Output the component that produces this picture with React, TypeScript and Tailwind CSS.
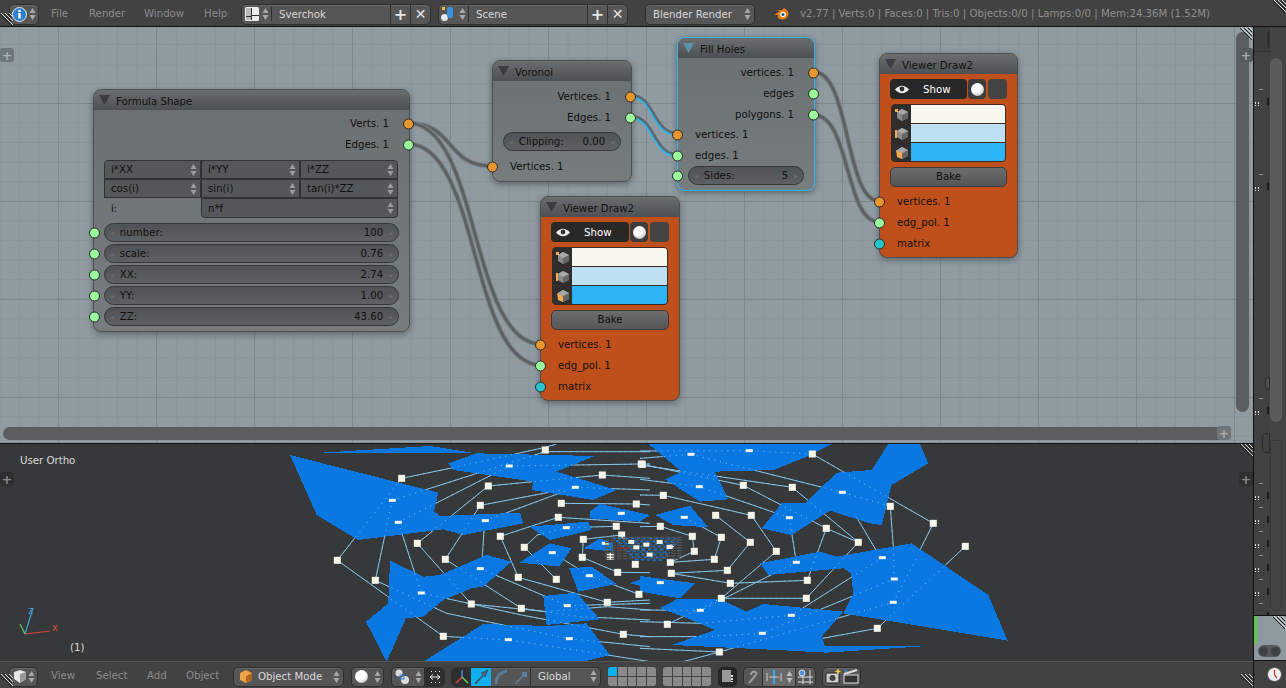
import type { ReactNode } from 'react';

const pill = 'flex items-center rounded-[5px] border border-[#2f2f2f] bg-[#565656] shadow-[inset_0_1px_0_#666]';
const nodeText = 'text-[10.2px] leading-none text-[#101010]';

function UpDown({ color = '#a8a8a8' }: { color?: string }) {
  return (
    <svg width="7" height="14" viewBox="0 0 7 14" className="shrink-0">
      <path d="M3.5 1 L6.5 6 H.5Z M3.5 13 L6.5 8 H.5Z" fill={color} />
    </svg>
  );
}

function Hatch({ className }: { className: string }) {
  return (
    <svg width="13" height="13" viewBox="0 0 13 13" className={`absolute ${className}`}>
      <path d="M1 0 L13 12 M5 0 L13 8 M9 0 L13 4" stroke="#d8d8d8" strokeWidth="1" />
      <path d="M0 1 L12 13 M4 1 L12 9 M8 1 L12 5" stroke="#222" strokeWidth="1" />
    </svg>
  );
}

function PlusTab({ className }: { className: string }) {
  return (
    <div className={`absolute flex h-[14px] w-[14px] items-center justify-center rounded-[3px] text-[13px] leading-none font-bold ${className}`}>
      +
    </div>
  );
}

function Socket({ color, side }: { color: string; side: 'left' | 'right' }) {
  const place = side === 'left' ? '-left-[6px]' : '-right-[5px]';
  const colors: Record<string, string> = {
    orange: 'bg-[#e8962e]',
    green: 'bg-[#9afc9a]',
    teal: 'bg-[#27c3cb]',
  };
  return (
    <span className={`absolute top-1/2 h-[11px] w-[11px] -translate-y-1/2 rounded-full border border-[#2a2a2a] ${place} ${colors[color]}`} />
  );
}

function Node({
  title,
  className,
  orange,
  active,
  children,
}: {
  title: string;
  className: string;
  orange?: boolean;
  active?: boolean;
  children: ReactNode;
}) {
  return (
    <div
      className={`absolute rounded-[8px] border shadow-[0_2px_6px_rgba(0,0,0,0.35)] ${
        active ? 'border-[#2bb6ee]' : 'border-[#4c5052]'
      } ${orange ? 'bg-[#bf501c]' : 'bg-[linear-gradient(#6a7072,#777d7f)]'} ${className}`}
    >
      <div className="flex h-[20px] items-center gap-[6px] rounded-t-[7px] bg-[linear-gradient(#6b6e70,#4d5052)] pl-[5px]">
        <svg width="11" height="10" viewBox="0 0 11 10">
          <path d="M0 0 H11 L5.5 10Z" fill={active ? '#5b92aa' : '#3b3e40'} />
        </svg>
        <span className={`translate-y-[1.5px] ${nodeText}`}>{title}</span>
      </div>
      {children}
    </div>
  );
}

function OutRow({ label, color }: { label: string; color: string }) {
  return (
    <div className={`relative flex h-[21px] items-center justify-end pt-[2px] pr-[20px] ${nodeText}`}>
      {label}
      <Socket color={color} side="right" />
    </div>
  );
}

function InRow({ label, color, className = '' }: { label: string; color: string; className?: string }) {
  return (
    <div className={`relative flex h-[21px] items-center pt-[2px] pl-[17px] ${nodeText} ${className}`}>
      {label}
      <Socket color={color} side="left" />
    </div>
  );
}

function Slider({ label, value, socket, className = '' }: { label: string; value: string; socket?: boolean; className?: string }) {
  return (
    <div className={`relative ${className}`}>
      <div className={`flex h-[19px] items-center justify-between rounded-full border border-[#343638] bg-[linear-gradient(#505355,#5e6163)] px-[5px] pt-[2px] ${nodeText}`}>
        <span className="flex items-center gap-[6px]">
          <span className="text-[5px] text-[#686c6e]">◀</span>
          {label}
        </span>
        <span className="flex items-center gap-[6px]">
          {value}
          <span className="text-[5px] text-[#686c6e]">▶</span>
        </span>
      </div>
      {socket && <span className="absolute top-1/2 -left-[15px] h-[11px] w-[11px] -translate-y-1/2 rounded-full border border-[#2a2a2a] bg-[#9afc9a]" />}
    </div>
  );
}

function Cell({ text, className = '' }: { text: string; className?: string }) {
  return (
    <div className={`flex items-center justify-between border border-[#303234] bg-[#54585a] pr-[3px] pl-[6px] ${nodeText} ${className}`}>
      <span className="translate-y-[1px]">{text}</span>
      <UpDown color="#9a9da0" />
    </div>
  );
}

function CubeIcon({ mark }: { mark: 'v' | 'e' | 'f' }) {
  return (
    <svg width="15" height="15" viewBox="0 0 15 15">
      <path d="M8 2 L14 5 V11 L8 14 L3 11 V5Z" fill="#8a8a8a" />
      <path d="M8 8 L14 5 V11 L8 14Z" fill="#666" />
      <path d="M8 8 L3 5 L8 2 L14 5Z" fill="#a8a8a8" />
      {mark === 'v' && <rect x="1" y="2" width="3" height="3" fill="#f5a94e" />}
      {mark === 'e' && <rect x="1" y="4" width="2" height="8" fill="#f5a94e" />}
      {mark === 'f' && <path d="M2 5 L8 8 V14 L3 12Z" fill="#f5a94e" />}
    </svg>
  );
}

function ViewerBody() {
  const swatches = ['bg-[#f9f8f0]', 'bg-[#bde0f2]', 'bg-[#2db4f5]'];
  const marks = ['v', 'e', 'f'] as const;
  return (
    <div className="flex flex-col pt-[5px]">
      <div className="flex h-[20px] gap-[1px] px-[10px]">
        <div className="flex w-[78px] items-center rounded-[4px] bg-[#282828] pl-[5px] text-[10.2px] text-white">
          <svg width="14" height="9" viewBox="0 0 14 9">
            <path d="M0 4.5 Q7 -3 14 4.5 Q7 12 0 4.5Z" fill="#eee" />
            <circle cx="7" cy="4" r="2.4" fill="#333" />
          </svg>
          <span className="ml-[14px] translate-y-[1px]">Show</span>
        </div>
        <div className="flex w-[18px] items-center justify-center rounded-[4px] bg-[#3c3c3c]">
          <span className="h-[13px] w-[13px] rounded-full bg-[radial-gradient(circle_at_40%_35%,#fff_40%,#999)]" />
        </div>
        <div className="ml-[1px] w-[19px] rounded-[4px] bg-[#444]" />
      </div>
      <div className="mx-[11px] mt-[5px] flex flex-col gap-[1px] overflow-hidden rounded-[4px] border border-[#3a2a22] bg-[#3a2a22]">
        {swatches.map((s, i) => (
          <div key={s} className="flex h-[18px]">
            <div className="flex w-[19px] items-center justify-center bg-[#2e2e2e]">
              <CubeIcon mark={marks[i]} />
            </div>
            <div className={`flex-1 ${s}`} />
          </div>
        ))}
      </div>
      <div className={`mx-[10px] mt-[5px] flex h-[20px] items-center justify-center rounded-[5px] border border-[#3b3b3b] bg-[linear-gradient(#6c6c6c,#565656)] pt-[1px] ${nodeText}`}>
        Bake
      </div>
      <div className="mt-[4px]">
        <InRow label="vertices. 1" color="orange" />
        <InRow label="edg_pol. 1" color="green" />
        <InRow label="matrix" color="teal" />
      </div>
    </div>
  );
}

const wires = [
  'M408 123 C455 123 445 166 492 166',
  'M408 123 C480 123 470 344 541 344',
  'M408 144 C480 144 470 365 541 365',
  'M814 72 C850 72 845 201 879 201',
  'M814 115 C850 115 845 222 879 222',
];
const activeWires = ['M630 96 C655 96 652 134 677 134', 'M630 117 C655 117 652 155 677 155'];

function NodeEditor() {
  const rows: [string, string][] = [
    ['number:', '100'],
    ['scale:', '0.76'],
    ['XX:', '2.74'],
    ['YY:', '1.00'],
    ['ZZ:', '43.60'],
  ];
  return (
    <div className="relative h-[416px] overflow-hidden bg-[#8f9aa1] [background-image:linear-gradient(#7c878e_1px,transparent_1px),linear-gradient(90deg,#7c878e_1px,transparent_1px),linear-gradient(#88939a_1px,transparent_1px),linear-gradient(90deg,#88939a_1px,transparent_1px)] [background-position:0_76px,58px_0,0_17px,19px_0] [background-size:100%_98px,98px_100%,100%_19.6px,19.6px_100%]">
      <svg width="1253" height="416" viewBox="0 27 1253 416" className="absolute inset-0">
        {wires.map((d) => (
          <g key={d} fill="none">
            <path d={d} stroke="#7c8488" strokeWidth="5" />
            <path d={d} stroke="#5d6163" strokeWidth="3" />
          </g>
        ))}
        {activeWires.map((d) => (
          <g key={d} fill="none">
            <path d={d} stroke="#2bb6ee" strokeWidth="4" />
            <path d={d} stroke="#61686c" strokeWidth="2.5" transform="translate(.5 -1)" />
          </g>
        ))}
      </svg>

      <Node title="Formula Shape" className="top-[62px] left-[93px] h-[243px] w-[317px]">
        <div className="pt-[3px]">
          <OutRow label="Verts. 1" color="orange" />
          <OutRow label="Edges. 1" color="green" />
        </div>
        <div className="mx-[10px] mt-[5px] grid grid-cols-[97px_99px_98px] grid-rows-[19px_19px_20px]">
          <Cell text="i*XX" className="rounded-tl-[4px]" />
          <Cell text="i*YY" />
          <Cell text="i*ZZ" className="rounded-tr-[4px]" />
          <Cell text="cos(i)" />
          <Cell text="sin(i)" />
          <Cell text="tan(i)*ZZ" />
          <div className={`flex items-center pt-[3px] pl-[7px] ${nodeText}`}>i:</div>
          <Cell text="n*f" className="col-span-2 rounded-b-[4px]" />
        </div>
        <div className="mx-[10px] mt-[5px] flex flex-col gap-[2px]">
          {rows.map(([l, v]) => (
            <Slider key={l} label={l} value={v} socket />
          ))}
        </div>
      </Node>

      <Node title="Voronoi" className="top-[33px] left-[492px] h-[122px] w-[140px]">
        <div className="pt-[5px]">
          <OutRow label="Vertices. 1" color="orange" />
          <OutRow label="Edges. 1" color="green" />
        </div>
        <Slider label="Clipping:" value="0.00" className="mx-[10px] mt-[4px]" />
        <InRow label="Vertices. 1" color="orange" className="mt-[5px]" />
      </Node>

      <Node title="Fill Holes" active className="top-[10px] left-[677px] h-[154px] w-[138px]">
        <div className="pt-[4px]">
          <OutRow label="vertices. 1" color="orange" />
          <OutRow label="edges" color="green" />
          <OutRow label="polygons. 1" color="green" />
        </div>
        <InRow label="vertices. 1" color="orange" className="-mt-[1px]" />
        <InRow label="edges. 1" color="green" />
        <div className="relative mx-[10px]">
          <Slider label="Sides:" value="5" />
          <span className="absolute top-1/2 -left-[16px] h-[11px] w-[11px] -translate-y-1/2 rounded-full border border-[#2a2a2a] bg-[#9afc9a]" />
        </div>
      </Node>

      <Node title="Viewer Draw2" orange className="top-[169px] left-[540px] h-[205px] w-[140px]">
        <ViewerBody />
      </Node>
      <Node title="Viewer Draw2" orange className="top-[26px] left-[879px] h-[205px] w-[139px]">
        <ViewerBody />
      </Node>

      <div className="absolute top-[5px] right-[4px] h-[380px] w-[13px] rounded-full bg-[#5b5e60]" />
      <div className="absolute right-[22px] bottom-[3px] left-[3px] h-[13px] rounded-full bg-[#5b5e60]" />
      <PlusTab className="top-[21px] left-0 bg-[#6c767c] text-[#a9b1b5]" />
      <PlusTab className="top-[21px] right-0 bg-[#555a5d] text-[#a9a9a9]" />
      <PlusTab className="right-[22px] bottom-[3px] bg-[#6e7478] text-[#aaa]" />
      <Hatch className="top-0 right-0" />
    </div>
  );
}

const polys9 = [
  [30, 45, 475, 158, 462, 215, 480, 228, 720, 218, 730, 250, 550, 285, 490, 268, 235, 300, 110, 225],
  [90, 40, 450, 18, 590, 40, 945, 48, 830, 95, 1010, 150, 940, 180, 755, 150, 760, 125, 520, 90, 505, 70, 590, 40],
  [748, 260, 925, 245, 935, 270, 810, 300],
  [930, 215, 960, 192, 1110, 225, 1080, 245, 930, 235],
  [910, 325, 960, 295, 1000, 310, 1000, 335],
  [718, 368, 810, 310, 875, 325, 838, 380],
  [330, 362, 430, 410, 480, 405, 620, 345, 695, 365, 610, 440, 575, 445, 490, 480, 430, 530, 378, 535, 320, 665, 258, 545, 325, 490],
  [868, 385, 935, 380, 1010, 432, 895, 455],
  [1050, 430, 1110, 408, 1110, 445],
  [790, 468, 890, 458, 960, 538, 800, 555],
  [430, 665, 610, 552, 800, 558, 920, 550, 990, 645, 910, 665],
];
const polys10 = [
  [25, 12, 575, 12, 500, 50, 400, 90, 225, 95, 265, 178, 180, 185, 75, 118, 125, 95],
  [745, 12, 840, 12, 865, 70, 755, 135, 725, 255, 690, 250, 570, 212, 455, 285, 365, 265, 425, 190, 495, 190, 590, 98, 695, 90],
  [45, 225, 150, 197, 205, 262, 100, 255],
  [0, 408, 165, 430, 120, 475, 0, 455],
  [360, 370, 540, 335, 590, 350, 815, 310, 1045, 465, 1103, 602, 640, 525, 610, 520, 640, 460, 633, 400, 610, 385, 550, 390, 385, 405],
  [60, 505, 110, 478, 240, 478, 320, 515, 370, 492, 610, 515, 545, 590, 555, 618, 865, 618, 560, 638, 410, 630, 95, 615, 225, 570, 130, 530],
];
const lines9 = [
  [172, 361, 365, 115, 510, 85, 796, 22, 830, 12],
  [337, 181, 796, 35, 1110, 35],
  [337, 181, 286, 421],
  [172, 361, 490, 589, 685, 600, 950, 640, 1110, 665],
  [286, 421, 500, 520, 868, 596, 1110, 620],
  [355, 247, 424, 459, 724, 525, 1030, 583, 1110, 590],
  [355, 247, 688, 78, 1084, 72, 1110, 72],
  [412, 310, 625, 138, 967, 105, 1110, 115],
  [412, 310, 574, 492, 800, 515, 982, 500, 1110, 510],
  [496, 358, 601, 196, 844, 150],
  [496, 358, 724, 505, 900, 530, 1110, 540],
  [601, 386, 862, 497, 1110, 490],
  [616, 242, 886, 142, 1110, 150],
  [661, 289, 715, 412, 982, 487, 1110, 480],
  [661, 289, 835, 232, 1110, 250],
  [733, 322, 772, 285, 859, 263, 1009, 259],
  [733, 322, 829, 418],
  [817, 338, 928, 407, 1077, 463],
  [607, 350, 612, 272],
  [844, 190, 1069, 192, 1110, 195],
  [907, 352, 1013, 397, 1110, 398],
  [907, 352, 910, 298, 1025, 285],
];
const lines10 = [
  [517, 42, 880, 250, 840, 330],
  [976, 319, 895, 395, 760, 520, 712, 565, 548, 595],
  [517, 42, 328, 32, 0, 33],
  [153, 43, 607, 157],
  [0, 55, 153, 43],
  [7, 73, 310, 136, 559, 265, 655, 307],
  [457, 142, 0, 75],
  [457, 142, 655, 307, 499, 475, 245, 475],
  [751, 199, 760, 320, 763, 417],
  [751, 199, 607, 157],
  [650, 232, 708, 330],
  [559, 265, 502, 421, 271, 430, 94, 400],
  [448, 233, 178, 140, 0, 118],
  [334, 226, 409, 334, 244, 475],
  [227, 226, 331, 307, 262, 391, 94, 400],
  [244, 292, 223, 358, 91, 367],
  [0, 165, 70, 166, 334, 226],
  [133, 232, 244, 292],
  [61, 259, 157, 289, 163, 334, 91, 367],
  [0, 260, 61, 259],
  [448, 233, 469, 367],
  [469, 367, 181, 511, 0, 510],
  [727, 353, 454, 526, 181, 550, 0, 545],
  [763, 417, 367, 580, 200, 590, 0, 590],
  [828, 358, 760, 487, 238, 636, 130, 665],
  [82, 553, 244, 475],
  [0, 625, 238, 636],
];
const squares9 = [
  [365, 115], [796, 30], [1084, 72], [967, 105], [625, 138], [601, 196], [844, 190], [1069, 192], [835, 232], [1009, 259],
  [661, 289], [733, 322], [910, 298], [1025, 285], [412, 310], [991, 349], [907, 352], [172, 361], [496, 358], [1066, 373],
  [1013, 397], [715, 412], [829, 418], [286, 421], [1077, 463], [982, 487], [574, 492], [724, 505], [490, 589], [1030, 583],
];
const flats9 = [
  [688, 78], [886, 142], [337, 181], [355, 247], [1024, 220], [616, 242], [859, 263], [976, 310], [817, 338], [601, 386],
  [928, 407], [424, 459], [862, 497], [685, 599], [868, 596],
];
const squares10 = [
  [517, 42], [7, 73], [310, 136], [457, 142], [70, 166], [751, 199], [227, 226], [334, 226], [559, 265], [880, 250], [61, 259],
  [157, 289], [244, 292], [331, 307], [409, 334], [655, 307], [976, 319], [163, 334], [223, 358], [91, 367], [262, 391],
  [94, 400], [271, 430], [502, 421], [244, 475], [499, 475], [82, 553], [712, 565], [238, 636],
];
const flats10 = [
  [328, 32], [153, 43], [178, 140], [607, 157], [133, 232], [448, 233], [91, 318], [469, 367], [727, 353], [763, 417],
  [61, 428], [760, 487], [181, 511], [454, 526], [367, 580],
];

function Mesh({ polys, lines, squares, flats, x }: { polys: number[][]; lines: number[][]; squares: number[][]; flats: number[][]; x: number }) {
  return (
    <g transform={`translate(${x} 440) scale(0.3333)`}>
      {lines.map((l) => (
        <polyline key={l.join()} points={l.join(' ')} fill="none" stroke="#84c6ee" strokeWidth="1" vectorEffect="non-scaling-stroke" />
      ))}
      {polys.map((p) => (
        <polygon key={p.join()} points={p.join(' ')} fill="#0a78e2" shapeRendering="crispEdges" />
      ))}
      {lines.map((l) => (
        <polyline key={l.join()} points={l.join(' ')} fill="none" stroke="#84c6ee" strokeWidth="1" strokeDasharray="1 5" vectorEffect="non-scaling-stroke" />
      ))}
      {squares.map(([a, b]) => (
        <rect key={`${a}-${b}`} x={a - 10.5} y={b - 10.5} width="21" height="21" fill="#f5f5e9" />
      ))}
      {flats.map(([a, b]) => (
        <rect key={`${a}-${b}`} x={a - 10.5} y={b - 4.5} width="21" height="9" fill="#f5f5e9" />
      ))}
    </g>
  );
}

function ThreeDView() {
  const clutter = [292, 300, 308, 316, 324, 332, 340, 348, 356];
  return (
    <div className="relative h-[218px] overflow-hidden border-t border-[#111] bg-[#37383a]">
      <svg width="1253" height="218" viewBox="0 444 1253 218" className="absolute inset-0">
        <Mesh polys={polys10} lines={lines10} squares={squares10} flats={flats10} x={640} />
        <Mesh polys={polys9} lines={lines9} squares={squares9} flats={flats9} x={280} />
        <g transform="translate(280 440) scale(0.3333)">
          {clutter.map((y, i) => (
            <g key={y}>
              <line x1="975" y1={y} x2="1206" y2={y} stroke="#555" strokeWidth="4" strokeDasharray="14 4" />
              <line x1={1000 + i * 8} y1={y + 3} x2={1200 - i * 6} y2={y + 5} stroke="#0a78e2" strokeWidth="4" strokeDasharray="10 8" />
            </g>
          ))}
          <rect x="1010" y="322" width="40" height="6" fill="#8a3030" />
          {[[1060, 316], [1090, 308], [1045, 300], [1100, 338], [1130, 300], [1160, 315]].map(([a, b]) => (
            <rect key={`${a}-${b}`} x={a} y={b} width="18" height="12" fill="#f5f5e9" />
          ))}
        </g>
        <g fill="none" strokeWidth="1.2">
          <path d="M25 634 L33 608" stroke="#3aa0d8" />
          <path d="M25 634 L50 631" stroke="#d84040" />
          <path d="M25 634 L20 624" stroke="#60c060" />
        </g>
      </svg>
      <span className="absolute top-[12px] left-[20px] text-[10.2px] leading-none text-[#dcdcdc]">User Ortho</span>
      <span className="absolute top-[162px] left-[28px] text-[10px] leading-none text-[#4a9cc8]">z</span>
      <span className="absolute top-[179px] left-[52px] text-[10px] leading-none text-[#d84a4a]">x</span>
      <span className="absolute top-[199px] left-[70px] text-[10.2px] leading-none text-[#dcdcdc]">(1)</span>
      <PlusTab className="top-[28px] left-0 bg-[#2e2f31] text-[#888]" />
      <PlusTab className="top-[28px] right-0 bg-[#2e2f31] text-[#888]" />
      <Hatch className="top-0 right-0" />
    </div>
  );
}

function ScreenIcon() {
  return (
    <svg width="14" height="14" viewBox="0 0 14 14">
      <rect x="0" y="0" width="14" height="14" rx="1.5" fill="#eee" />
      <rect x="6" y="1" width="1" height="12" fill="#333" />
      <rect x="7" y="8" width="7" height="1" fill="#333" />
      <rect x="1" y="1" width="5" height="12" fill="#b9b9b9" />
      <rect x="1" y="9" width="5" height="1" fill="#333" />
    </svg>
  );
}

function SceneIcon() {
  return (
    <svg width="15" height="16" viewBox="0 0 15 16">
      <circle cx="3.5" cy="11.5" r="3.5" fill="#e8e8e8" />
      <rect x="6" y="1" width="6" height="11" rx="2" fill="#3f8fe0" />
      <rect x="1" y="1" width="3" height="3" fill="#e8b948" />
    </svg>
  );
}

function NameField({ label, icon, w }: { label: string; icon: ReactNode; w: string }) {
  return (
    <div className={`${pill} h-[21px] ${w}`}>
      <div className="flex w-[30px] items-center justify-center gap-[3px] border-r border-[#2f2f2f]">
        {icon}
        <UpDown />
      </div>
      <span className="flex-1 translate-y-[1px] pl-[7px] text-[10.2px] leading-none text-[#d8d8d8]">{label}</span>
      <span className="flex w-[20px] justify-center border-l border-[#2f2f2f] text-[16px] leading-[19px] font-bold text-[#e6e6e6]">+</span>
      <span className="flex w-[20px] justify-center border-l border-[#2f2f2f] text-[14px] leading-[19px] font-bold text-[#e6e6e6]">✕</span>
    </div>
  );
}

function Menu({ items, starts }: { items: string[]; starts: string[] }) {
  return (
    <div className="flex text-[10.2px] leading-none text-[#8c8c8c]">
      {items.map((item, i) => (
        <span key={item} className={starts[i]}>
          {item}
        </span>
      ))}
    </div>
  );
}

function TopBar() {
  return (
    <div className="relative flex h-[27px] items-center border-b border-[#111] bg-[#424242] pt-[2px] pl-[9px]">
      <div className={`${pill} h-[21px] w-[30px] justify-center gap-[2px]`}>
        <svg width="15" height="15" viewBox="0 0 15 15">
          <circle cx="7.5" cy="7.5" r="7" fill="#2f7fd0" stroke="#eaeaea" strokeWidth="1" />
          <rect x="6.3" y="6" width="2.4" height="5.5" fill="#fff" />
          <rect x="6.3" y="3" width="2.4" height="2" fill="#fff" />
        </svg>
        <UpDown />
      </div>
      <Menu items={['File', 'Render', 'Window', 'Help']} starts={['ml-[12px] w-[38px]', 'w-[55px]', 'w-[60px]', 'w-[37px]']} />
      <NameField label="Sverchok" icon={<ScreenIcon />} w="w-[190px]" />
      <NameField label="Scene" icon={<SceneIcon />} w="ml-[7px] w-[190px]" />
      <div className={`${pill} ml-[17px] h-[21px] w-[110px] justify-between pr-[3px] pl-[7px] text-[10.2px] text-[#d8d8d8]`}>
        <span className="translate-y-[1px]">Blender Render</span>
        <UpDown />
      </div>
      <svg width="17" height="14" viewBox="0 0 17 14" className="ml-[18px]">
        <path d="M1 8 L7 4 L3 3 H9 L11 1 Q17 4 15 9 Q12 14 7 12 Q4 11 5 8Z" fill="#e87d0d" />
        <circle cx="10" cy="7.5" r="2.8" fill="#fff" />
        <circle cx="10" cy="7.5" r="1.6" fill="#265787" />
      </svg>
      <span className="ml-[10px] text-[10.2px] leading-none text-[#8f8f8f]">
        v2.77 | Verts:0 | Faces:0 | Tris:0 | Objects:0/0 | Lamps:0/0 | Mem:24.36M (1.52M)
      </span>
      <Hatch className="top-0 right-0" />
      <Hatch className="top-[13px] left-0" />
    </div>
  );
}

function Seg({ className = '', children }: { className?: string; children?: ReactNode }) {
  return <div className={`flex h-full items-center justify-center ${className}`}>{children}</div>;
}

function LayerGrid({ first }: { first?: boolean }) {
  return (
    <div className="grid h-[19px] w-[48px] grid-cols-5 grid-rows-2 gap-[1px] overflow-hidden rounded-[3px]">
      {Array.from({ length: 10 }).map((_, i) => (
        <span key={i} className={first && i === 0 ? 'bg-[#10b0f0]' : 'bg-[#8a8a8a]'} />
      ))}
    </div>
  );
}

function BottomBar() {
  return (
    <div className="relative flex h-[26px] items-center border-t border-[#555] bg-[#424242] pt-[4px] pl-[9px]">
      <div className={`${pill} h-[20px] w-[29px] justify-center gap-[1px]`}>
        <svg width="14" height="15" viewBox="0 0 14 15">
          <path d="M7 1 L13 3 V10 L7 14 L1 10 V3Z" fill="#e6e6e6" />
          <path d="M7 5 L13 3 V10 L7 14Z" fill="#999" />
        </svg>
        <UpDown />
      </div>
      <Menu items={['View', 'Select', 'Add', 'Object']} starts={['ml-[13px] w-[45px]', 'w-[51px]', 'w-[39px]', 'w-[47px]']} />
      <div className={`${pill} h-[20px] w-[111px] justify-between pr-[3px] pl-[5px] text-[10.2px] text-[#d8d8d8]`}>
        <span className="flex items-center gap-[5px]">
          <svg width="14" height="15" viewBox="0 0 14 15">
            <path d="M7 1 L13 4 V11 L7 14 L1 11 V4Z" fill="#eea24a" />
            <path d="M7 7 L13 4 V11 L7 14Z" fill="#b06a20" />
          </svg>
          Object Mode
        </span>
        <UpDown />
      </div>
      <div className={`${pill} ml-[7px] h-[20px] w-[33px] justify-center gap-[6px]`}>
        <span className="h-[13px] w-[13px] rounded-full bg-[radial-gradient(circle_at_40%_35%,#fff_45%,#999)]" />
        <UpDown />
      </div>
      <div className={`${pill} ml-[7px] h-[20px] w-[54px]`}>
        <Seg className="w-[33px] gap-[5px] border-r border-[#2f2f2f]">
          <svg width="15" height="16" viewBox="0 0 15 16">
            <circle cx="4" cy="4" r="3.5" fill="#ddd" />
            <circle cx="10" cy="11" r="4" fill="#ddd" />
            <rect x="5" y="6" width="4" height="4" fill="none" stroke="#2a7fe0" />
          </svg>
          <UpDown />
        </Seg>
        <Seg className="flex-1 rounded-r-[4px] bg-[#2e2e2e]">
          <svg width="14" height="14" viewBox="0 0 14 14" fill="none" stroke="#eee">
            <path d="M2 7 H12 M2 7 L5 4.5 M2 7 L5 9.5 M12 7 L9 4.5 M12 7 L9 9.5" />
            <path d="M3 1.5 H4 M7 1.5 H8 M11 1.5 H12 M3 12.5 H4 M7 12.5 H8 M11 12.5 H12" />
          </svg>
        </Seg>
      </div>
      <div className={`${pill} ml-[6px] h-[20px] w-[150px] overflow-hidden`}>
        <Seg className="w-[19px] bg-[#2e2e2e]">
          <svg width="16" height="16" viewBox="0 0 16 16" fill="none" strokeWidth="1.5">
            <path d="M8 8 V1" stroke="#3d8fe0" />
            <path d="M8 8 L2 14" stroke="#e04040" />
            <path d="M8 8 L14 14" stroke="#60d060" />
          </svg>
        </Seg>
        <Seg className="w-[20px] bg-[#10b0f0]">
          <svg width="16" height="16" viewBox="0 0 16 16">
            <path d="M2 14 L10 6 L8 4 L15 1 L12 8 L10.5 6.5 L3 15Z" fill="#50667a" stroke="#223" strokeWidth=".5" />
          </svg>
        </Seg>
        <Seg className="w-[20px]">
          <svg width="16" height="16" viewBox="0 0 16 16" fill="none">
            <path d="M3 15 Q3 4 14 2" stroke="#5a7f9a" strokeWidth="2.5" />
          </svg>
        </Seg>
        <Seg className="w-[20px] border-r border-[#2f2f2f]">
          <svg width="16" height="16" viewBox="0 0 16 16">
            <path d="M2 14 L9 7 V3 H14 V8 H10 L3 15Z" fill="#5a7f9a" />
          </svg>
        </Seg>
        <div className="flex flex-1 items-center justify-between pr-[3px] pl-[7px] text-[10.2px] text-[#d8d8d8]">
          Global
          <UpDown />
        </div>
      </div>
      <div className="ml-[7px] flex gap-[7px]">
        <LayerGrid first />
        <LayerGrid />
      </div>
      <div className="ml-[7px] flex h-[20px] w-[19px] items-center justify-center rounded-[5px] bg-[#262626]">
        <svg width="14" height="15" viewBox="0 0 14 15">
          <rect x="1" y="1" width="9" height="12" fill="#999" />
          <path d="M11 6 V13" stroke="#ddd" strokeWidth="2" strokeDasharray="2 1" />
        </svg>
      </div>
      <div className={`${pill} ml-[6px] h-[20px] w-[73px]`}>
        <Seg className="w-[18px]">
          <svg width="12" height="14" viewBox="0 0 12 14" fill="none" stroke="#9a9a9a" strokeWidth="2">
            <path d="M2 13 L8 6 Q11 2 7 1.5 Q4 2 4 5" />
          </svg>
        </Seg>
        <Seg className="w-[34px] gap-[4px] border-x border-[#2f2f2f] bg-[#6a6a6a]">
          <svg width="16" height="14" viewBox="0 0 16 14">
            <rect x="7" y="0" width="2" height="14" fill="#3ba7ee" />
            <path d="M1 3 V11 M15 3 V11 M3 7 H13" stroke="#ccc" />
          </svg>
          <UpDown color="#bbb" />
        </Seg>
        <Seg className="flex-1">
          <svg width="15" height="15" viewBox="0 0 15 15">
            <path d="M5 1 V15 M12 1 V15 M0 8 H15 M0 13 H15" stroke="#ddd" />
            <circle cx="4" cy="4" r="3" fill="#4a90e0" stroke="#ddd" />
          </svg>
        </Seg>
      </div>
      <div className={`${pill} ml-[6px] h-[20px] w-[39px]`}>
        <Seg className="w-[19px]">
          <svg width="16" height="15" viewBox="0 0 16 15">
            <rect x="1" y="4" width="13" height="10" rx="1" fill="#ccc" stroke="#222" />
            <circle cx="7.5" cy="9" r="3" fill="#444" />
            <path d="M13 0 V5 M10.5 2.5 H15.5" stroke="#f5d040" strokeWidth="1.5" />
          </svg>
        </Seg>
        <Seg className="flex-1">
          <svg width="16" height="15" viewBox="0 0 16 15">
            <rect x="1" y="6" width="14" height="8" fill="#333" stroke="#ddd" />
            <path d="M1 5 L14 1" stroke="#ddd" strokeWidth="2" />
            <path d="M2 1 L4 3" stroke="#3d8fe0" strokeWidth="2" />
          </svg>
        </Seg>
      </div>
      <Hatch className="right-0 bottom-0" />
      <Hatch className="bottom-0 left-0" />
    </div>
  );
}

function SidePanel() {
  const dashes = [89, 174, 398, 483, 507, 531, 555, 579, 603];
  return (
    <div className="flex w-[33px] flex-col border-l border-[#111] bg-[#414141]">
      <div className="relative h-[589px] overflow-hidden border-b border-[#111]">
        <div className="flex h-[25px] items-center border-b border-[#333] bg-[#3d3d3d] pl-[13px]">
          <div className="flex h-[17px] w-[19px] flex-col items-center justify-center gap-[2px] rounded-[3px] bg-[#2e2e2e]">
            <span className="h-[5px] w-[14px] rounded-full bg-[#aaa]" />
            <span className="h-[5px] w-[14px] rounded-full bg-[#eee]" />
          </div>
        </div>
        <div className="absolute top-0 right-0 bottom-0 w-[16px] bg-[#444]" />
        <div className="absolute top-[31px] right-[4px] h-[364px] w-[12px] rounded-full bg-[#5b5b5b]" />
        <div className="absolute top-[413px] right-[4px] bottom-[4px] w-[12px] rounded-b-full border border-[#393939]" />
        {dashes.map((y) => (
          <div key={y}>
            <span className="absolute left-[5px] h-[1px] w-[4px] bg-[#8a8a8a]" style={{ top: y - 27 }} />
            <span className="absolute left-[1px] h-[4px] w-[4px] border-x border-dotted border-[#ddd]" style={{ top: y - 14 }} />
            <span className="absolute left-[13px] h-[7px] w-[2px] bg-[#1c1c1c]" style={{ top: y - 18 }} />
          </div>
        ))}
        <div className="absolute top-[350px] left-[11px] h-[13px] w-[5px] rounded-l-[4px] border border-[#2c2c2c] bg-[#505050]" />
        <div className="absolute top-[406px] left-[8px] h-[20px] w-[8px] rounded-l-[4px] border border-[#2c2c2c]" />
      </div>
      <div className="relative h-[44px] bg-[#8e999f]">
        <div className="absolute top-0 left-0 h-[28px] w-[3px] bg-[#5fc84a]" />
        <div className="absolute top-[29px] left-[4px] flex h-[12px] w-[23px] items-center justify-between rounded-full bg-[#55585a] px-[1px]">
          <span className="h-[9px] w-[9px] rounded-full bg-[#3e4143]" />
          <span className="h-[9px] w-[9px] rounded-full bg-[#3e4143]" />
        </div>
        <Hatch className="top-0 right-0" />
      </div>
      <div className="flex flex-1 items-center border-t border-[#111] pl-[13px]">
        <svg width="15" height="15" viewBox="0 0 15 15">
          <circle cx="7.5" cy="7.5" r="7" fill="#eee" stroke="#555" />
          <path d="M7.5 3 V8 L10 11" stroke="#d03030" fill="none" strokeWidth="1.2" />
        </svg>
      </div>
    </div>
  );
}

export default function App() {
  return (
    <div className="flex h-[688px] w-[1286px] flex-col overflow-hidden bg-[#424242] font-['DejaVu_Sans',sans-serif]">
      <TopBar />
      <div className="flex flex-1">
        <div className="flex w-[1253px] flex-col">
          <NodeEditor />
          <ThreeDView />
          <BottomBar />
        </div>
        <SidePanel />
      </div>
    </div>
  );
}
